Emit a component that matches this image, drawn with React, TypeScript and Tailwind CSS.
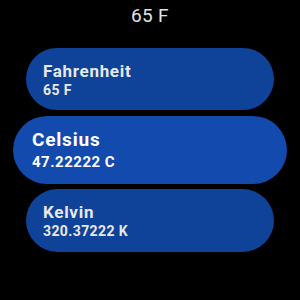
export default function App() {
  return (
    <div className="w-[300px] h-[300px] bg-black flex flex-col items-center font-['Roboto',sans-serif]">
      <div className="h-[48px] pt-[5px] text-[19px] leading-[22px] tracking-[0.3px] text-[#e2e2e2]">65 F</div>
      <div className="w-[248px] h-[62px] rounded-full bg-[#0f4299] pl-[17px] flex flex-col justify-center text-[#e8e8e8]">
        <div className="text-[17px] leading-[20px] font-bold tracking-[0.7px]">Fahrenheit</div>
        <div className="mt-[1px] text-[14px] leading-[16px] font-bold tracking-[0.4px]">65 F</div>
      </div>
      <div className="mt-[6px] w-[274px] h-[68px] rounded-full bg-[#134aad] pl-[19px] flex flex-col justify-center text-white">
        <div className="text-[19px] leading-[22px] font-bold tracking-[0.8px]">Celsius</div>
        <div className="mt-[2px] text-[15px] leading-[18px] font-bold tracking-[0.5px]">47.22222 C</div>
      </div>
      <div className="mt-[5px] w-[248px] h-[63px] rounded-full bg-[#0f4299] pl-[17px] flex flex-col justify-center text-[#e8e8e8]">
        <div className="text-[17px] leading-[20px] font-bold tracking-[0.7px]">Kelvin</div>
        <div className="mt-[1px] text-[14px] leading-[16px] font-bold tracking-[0.4px]">320.37222 K</div>
      </div>
    </div>
  );
}
